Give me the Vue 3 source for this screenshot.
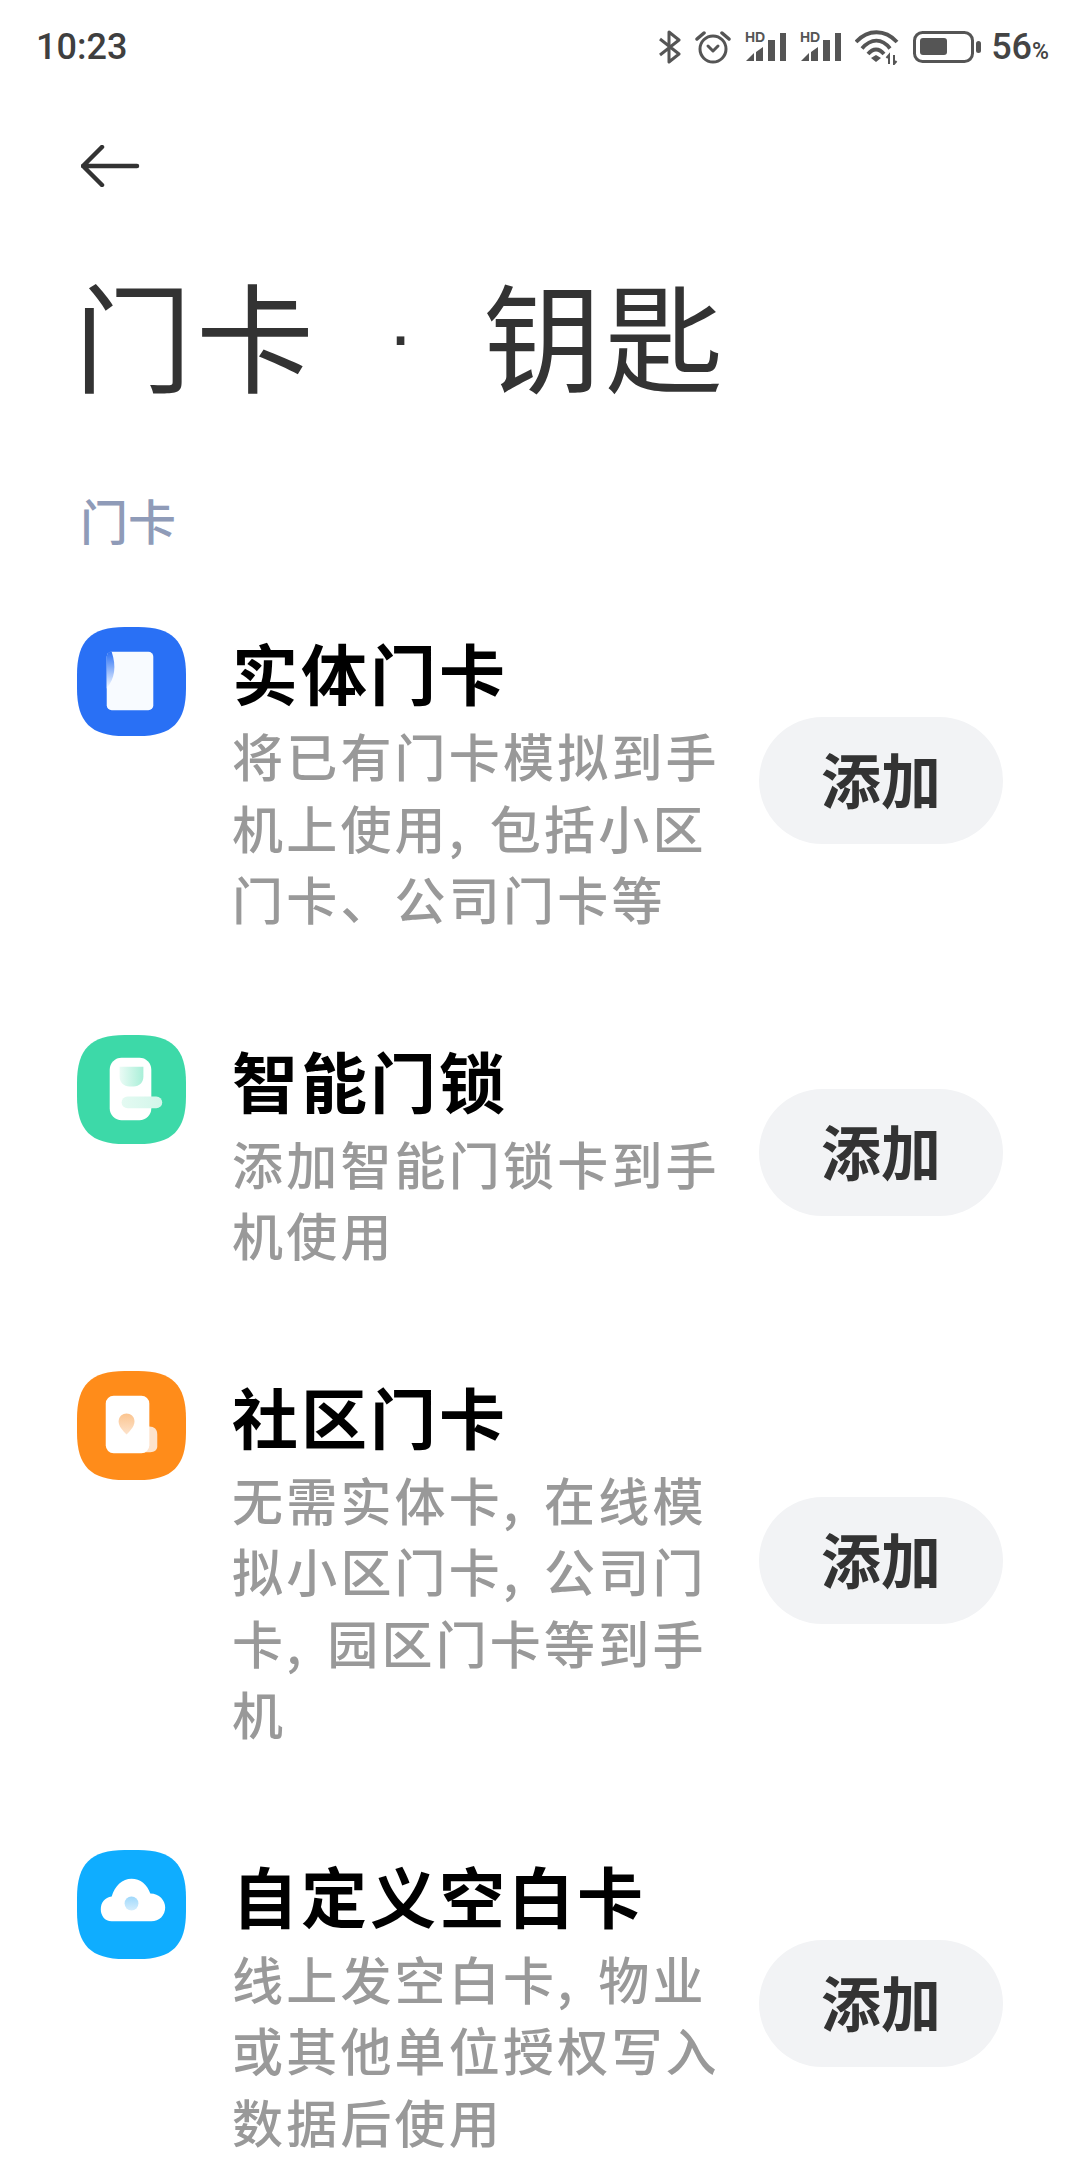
<template>
  <div class="page">
    <div class="status-bar">
      <span class="time">10:23</span>
      <div class="status-icons">
        <svg width="22" height="34" viewBox="0 0 22 34" fill="none" stroke="#555" stroke-width="3">
          <path d="M1 9 L20 24 L10 32 V2 L20 10 L1 25" stroke-linejoin="round" />
        </svg>
        <svg width="36" height="34" viewBox="0 0 36 34" fill="none" stroke="#555" stroke-width="3">
          <circle cx="18" cy="19" r="13" />
          <path d="M13 16 L18 21 L23 16" stroke-linecap="round" stroke-linejoin="round" />
          <path d="M2 9 L9 3 M34 9 L27 3" stroke-width="3.5" stroke-linecap="round" />
        </svg>
        <svg v-for="n in 2" :key="n" width="41" height="34" viewBox="0 0 41 34" fill="#555">
          <text x="0" y="12" class="hd">HD</text>
          <path d="M1 31 L9 23 V31 Z M11 31 V22 L18 17 V31 Z" />
          <rect x="23" y="10" width="7" height="21" />
          <rect x="35" y="3" width="6" height="28" />
        </svg>
        <svg width="44" height="36" viewBox="0 0 44 36" fill="none" stroke="#555" stroke-width="3.8">
          <path d="M1 13 C13 0 30 0 42 13" />
          <path d="M7 19.5 C16 9 27 9 35 19.5" />
          <path d="M13 25 C18 19 24 19 29 25" />
          <path d="M16 29 L21 26 L26 29 L21 33 Z" fill="#555" stroke="none" />
          <path d="M34 35 V26 L31.5 29 M39 26 V35 L41.5 32" stroke-width="2" />
        </svg>
        <svg width="68" height="32" viewBox="0 0 68 32" fill="none">
          <rect x="1.5" y="1.5" width="58" height="29" rx="8" stroke="#555" stroke-width="3" />
          <rect x="7" y="7" width="27" height="17" rx="3" fill="#555" />
          <rect x="63" y="10" width="5" height="12" rx="2.5" fill="#555" />
        </svg>
        <span class="percent">56<small>%</small></span>
      </div>
    </div>

    <div class="nav">
      <svg width="60" height="42" viewBox="0 0 60 42" fill="none" stroke="#333" stroke-width="4.5" stroke-linecap="round" stroke-linejoin="round">
        <path d="M21 2 L2 21 L21 40 M2 21 H56" />
      </svg>
    </div>

    <h1 class="page-title">门卡<span class="title-dot">·</span>钥匙</h1>
    <div class="section-label">门卡</div>

    <ul class="card-list">
      <li v-for="item in items" :key="item.title" class="card-row">
        <svg class="row-icon" viewBox="0 0 110 110">
          <path :fill="item.color" d="M48 0 H62 C96 0 110 14 110 48 V62 C110 96 96 110 62 110 H48 C14 110 0 96 0 62 V48 C0 14 14 0 48 0 Z" />
          <template v-if="item.kind === 'card'">
            <rect x="30" y="25" width="47" height="59" rx="5" fill="#f8fbff" />
            <path d="M30 30 C30 27 32 25 35 25 C40 40 38 52 30 62 Z" fill="url(#cardFold)" />
          </template>
          <template v-else-if="item.kind === 'lock'">
            <rect x="33" y="23" width="42" height="63" rx="12" fill="#fff" />
            <path d="M43 32 H67 V42 C67 48 63 52 57 52 H53 C47 52 43 48 43 42 Z" fill="url(#lockTop)" />
            <rect x="45" y="62" width="41" height="12" rx="6" fill="url(#lockBar)" />
          </template>
          <template v-else-if="item.kind === 'pin'">
            <path d="M60 56 H73 C78 56 81 59 81 64 V76 C81 80 78 82 74 82 H60 Z" fill="#fde3cc" />
            <rect x="29" y="25" width="44" height="58" rx="8" fill="#fff" />
            <path d="M50 64 C46 60 42 56 42 51 C42 46 46 43 50 43 C54 43 58 46 58 51 C58 56 54 60 50 64 Z" fill="url(#pinFill)" />
          </template>
          <template v-else>
            <path d="M35 72 C28 72 24 66 24 60 C24 53 28 48 35 47 C38 36 46 29 55 29 C64 29 71 35 74 44 C83 44 89 51 89 58 C89 66 83 72 75 72 Z" fill="#fff" />
            <circle cx="55" cy="54" r="7" fill="url(#cloudDot)" />
          </template>
          <defs>
            <linearGradient id="cardFold" x1="0" y1="0" x2="0" y2="1">
              <stop offset="0%" stop-color="#2970f5" />
              <stop offset="100%" stop-color="#f8fbff" />
            </linearGradient>
            <linearGradient id="lockTop" x1="0" y1="0" x2="1" y2="0">
              <stop offset="0%" stop-color="#eafbf5" />
              <stop offset="100%" stop-color="#a9efd8" />
            </linearGradient>
            <linearGradient id="lockBar" x1="0" y1="0" x2="1" y2="0">
              <stop offset="0%" stop-color="#e4faf2" />
              <stop offset="100%" stop-color="#d2f6ea" />
            </linearGradient>
            <linearGradient id="pinFill" x1="0" y1="0" x2="0" y2="1">
              <stop offset="0%" stop-color="#fbc48f" />
              <stop offset="100%" stop-color="#fde3cc" />
            </linearGradient>
            <linearGradient id="cloudDot" x1="0" y1="0" x2="0" y2="1">
              <stop offset="0%" stop-color="#9fd8fb" />
              <stop offset="100%" stop-color="#d5eefd" />
            </linearGradient>
          </defs>
        </svg>
        <div class="row-text">
          <div class="row-title">{{ item.title }}</div>
          <div class="row-desc">{{ item.desc }}</div>
        </div>
        <button class="add-btn">添加</button>
      </li>
    </ul>
  </div>
</template>

<script setup>
const items = [
  { kind: 'card', color: '#2970f5', title: '实体门卡', desc: '将已有门卡模拟到手机上使用, 包括小区门卡、公司门卡等' },
  { kind: 'lock', color: '#3dd9a8', title: '智能门锁', desc: '添加智能门锁卡到手机使用' },
  { kind: 'pin', color: '#ff8c1a', title: '社区门卡', desc: '无需实体卡, 在线模拟小区门卡, 公司门卡, 园区门卡等到手机' },
  { kind: 'cloud', color: '#0fadff', title: '自定义空白卡', desc: '线上发空白卡, 物业或其他单位授权写入数据后使用' },
]
</script>

<style scoped>
.page {
  width: 1080px;
  height: 2158px;
  overflow: hidden;
  background: #fff;
  font-family: "Noto Sans CJK SC", "Liberation Sans", sans-serif;
}

.status-bar {
  height: 94px;
  display: flex;
  align-items: center;
  justify-content: space-between;
  padding: 0 31px 0 36px;
}

.time {
  font-family: Roboto, "Liberation Sans", sans-serif;
  font-size: 36px;
  font-weight: 500;
  color: #3f3f3f;
}

.status-icons {
  display: flex;
  align-items: center;
  gap: 14px;
}

.hd {
  font-family: "Liberation Sans", sans-serif;
  font-size: 14px;
  font-weight: 700;
}

.percent {
  margin-left: -4px;
  font-family: Roboto, "Liberation Sans", sans-serif;
  font-size: 36px;
  font-weight: 500;
  color: #444;
}

.percent small {
  font-size: 23px;
}

.nav {
  padding: 51px 0 0 81px;
  height: 104px;
}

.page-title {
  margin: 0;
  padding: 9px 0 0 74px;
  font-size: 118px;
  line-height: 150px;
  font-weight: 400;
  color: #333;
  letter-spacing: 4px;
}

.title-dot {
  display: inline-block;
  width: 165px;
  line-height: 0;
  vertical-align: 22px;
  text-align: center;
  font-family: "Liberation Sans", sans-serif;
  font-size: 80px;
  letter-spacing: 0;
}

.section-label {
  padding: 81px 0 0 80px;
  font-size: 48px;
  line-height: 60px;
  font-weight: 500;
  color: #8f9bb8;
}

.card-list {
  list-style: none;
  margin: 0;
  padding: 78px 77px 0 77px;
}

.card-row {
  display: flex;
  align-items: center;
  margin-bottom: 100px;
}

.row-icon {
  width: 109px;
  height: 109px;
  flex: none;
  align-self: flex-start;
}

.row-text {
  width: 490px;
  margin-left: 46px;
  flex: none;
}

.row-title {
  margin: -3px 0 2px;
  font-size: 66px;
  line-height: 94px;
  font-weight: 700;
  color: #000;
  letter-spacing: 3px;
}

.row-desc {
  font-size: 51px;
  line-height: 71.5px;
  font-weight: 500;
  color: #999;
  letter-spacing: 3.2px;
  word-spacing: 8px;
}

.add-btn {
  width: 244px;
  height: 127px;
  padding: 0 0 6px;
  margin-left: auto;
  flex: none;
  border: none;
  border-radius: 64px;
  background: #f2f3f5;
  color: #333;
  font-family: inherit;
  font-size: 60px;
  font-weight: 700;
}
</style>
